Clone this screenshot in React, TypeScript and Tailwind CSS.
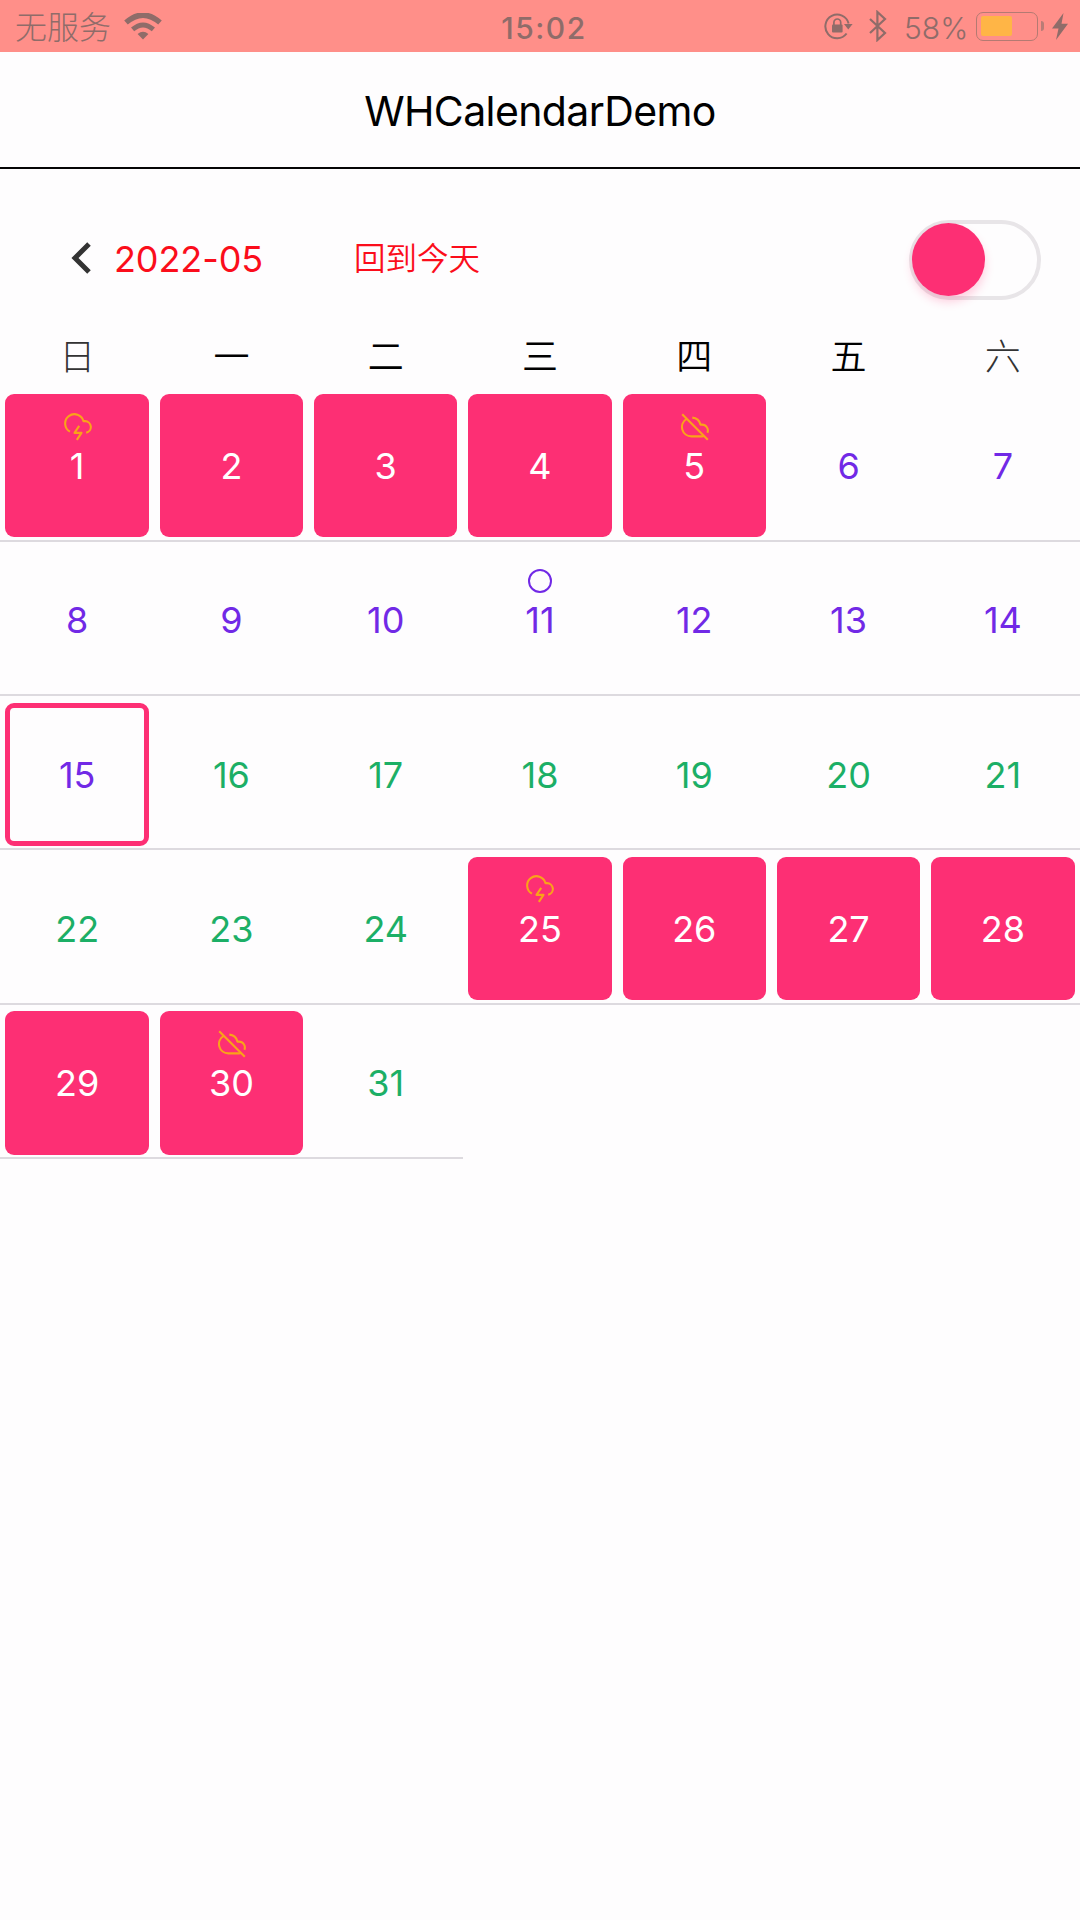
import React from "react";

type Mark = "storm" | "off" | "circle";

const PINK_DAYS = [1, 2, 3, 4, 5, 25, 26, 27, 28, 29, 30];
const MARKS: Record<number, Mark> = { 1: "storm", 5: "off", 11: "circle", 25: "storm", 30: "off" };
const WEEKDAYS = ["日", "一", "二", "三", "四", "五", "六"];
const TODAY = 15;

function WifiIcon() {
  return (
    <svg className="mt-[2px] h-[28px] w-[38px]" viewBox="0 0 38 28" fill="none" stroke="currentColor">
      <path d="M2 9.6Q19 -5.4 36 9.6" strokeWidth="5.4" />
      <path d="M8.6 16.4Q19 7.4 29.4 16.4" strokeWidth="4.8" />
      <path d="M13.6 21Q19 16.4 24.4 21L19 26.6Z" fill="currentColor" stroke="none" />
    </svg>
  );
}

function RotationLockIcon() {
  return (
    <svg className="h-[28px] w-[29px]" viewBox="0 0 29 28" fill="none" stroke="currentColor" strokeWidth="2">
      <path d="M24.6 11.5A11.8 11.8 0 1 0 22.6 21.5" />
      <path d="M20 12h8.6l-4.3 5.6z" fill="currentColor" stroke="none" />
      <rect x="8" y="12.5" width="10.6" height="8" rx="1" fill="currentColor" stroke="none" />
      <path d="M9.9 13v-2.6a3.4 3.4 0 0 1 6.8 0V13" strokeWidth="1.7" />
    </svg>
  );
}

function BluetoothIcon() {
  return (
    <svg className="h-[32px] w-[18px]" viewBox="0 0 18 32" fill="none" stroke="currentColor" strokeWidth="2.2">
      <path d="M1 9l15 14-7.6 7V2L16 9 1 23" />
    </svg>
  );
}

function Battery() {
  return (
    <div className="flex items-center gap-[3px]">
      <div className="h-[29px] w-[62px] rounded-[7px] border-[1.5px] border-[#b47a72] p-[3.5px]">
        <div className="h-full w-[31px] rounded-[2px] bg-[#ffb546]" />
      </div>
      <div className="h-[10px] w-[3px] rounded-r-full bg-[#b97c76]" />
    </div>
  );
}

function BoltIcon() {
  return (
    <svg className="h-[27px] w-[16px]" viewBox="0 0 16 27" fill="currentColor">
      <path d="M11.5 0L0 15.5h6.5L4 27 16 10.8H9.5z" />
    </svg>
  );
}

function DayMark({ mark }: { mark: Mark }) {
  if (mark === "circle") {
    return <div className="h-[24px] w-[24px] rounded-full border-2 border-[#7129e6]" />;
  }
  return (
    <svg
      className="ml-[1px] h-[28px] w-[28px] text-[#f9a319]"
      viewBox="0 0 24 24"
      fill="none"
      stroke="currentColor"
      strokeWidth="1.8"
      strokeLinejoin="round"
    >
      {mark === "storm" ? (
        <>
          <path d="M19 16.9A5 5 0 0 0 18 7h-1.26a8 8 0 1 0-11.62 9" />
          <path d="M13 11l-4 6h6l-4 6" />
        </>
      ) : (
        <>
          <path d="M22.61 16.95A5 5 0 0 0 18 10h-1.26a8 8 0 0 0-7.05-6M5 5a8 8 0 0 0 4 15h9a5 5 0 0 0 1.7-.3" />
          <path d="M1 1l22 22" />
        </>
      )}
    </svg>
  );
}

function Day({ day }: { day: number }) {
  const filled = PINK_DAYS.includes(day);
  const today = day === TODAY;
  const mark = MARKS[day];
  const tone = filled ? "text-white" : day <= TODAY ? "text-[#7129e6]" : "text-[#1caf66]";
  const box = filled
    ? "bg-[#fd2f74]"
    : today
      ? "border-[5px] border-[#fd2f74]"
      : "";
  return (
    <div className="relative h-[154.28px] p-[5.4px]">
      <div className={`flex h-full items-center justify-center rounded-[9px] text-[36px] leading-none font-[370] ${tone} ${box}`}>
        <span className="pt-[1px]">{day}</span>
      </div>
      {mark && (
        <div className="absolute inset-x-0 top-[24px] flex h-[28px] items-center justify-center">
          <DayMark mark={mark} />
        </div>
      )}
      <div className="absolute inset-x-0 bottom-[1px] h-[2px] bg-[#dddadf]" />
    </div>
  );
}

export default function App() {
  return (
    <div className="h-[1920px] w-[1080px] overflow-hidden bg-[#fefdfe] font-['Inter','Noto_Sans_CJK_SC',sans-serif]">
      <div className="grid h-[52px] grid-cols-3 items-center bg-[#ff8f89] text-[#8f6c69]">
        <div className="flex items-center pl-[15px]">
          <span className="w-[109px] pt-[3px] text-[32px] leading-none font-light whitespace-nowrap">无服务</span>
          <WifiIcon />
        </div>
        <div className="pt-[3px] pl-[8px] text-center text-[30px] leading-none font-medium tracking-[1.5px]">15:02</div>
        <div className="flex items-center justify-end pr-[12px]">
          <RotationLockIcon />
          <div className="w-[16px]" />
          <BluetoothIcon />
          <span className="ml-[17px] w-[72px] pt-[3px] text-[30px] leading-none font-[350] whitespace-nowrap">58%</span>
          <Battery />
          <div className="w-[8px]" />
          <BoltIcon />
        </div>
      </div>

      <header className="flex h-[117px] items-center justify-center border-b-2 border-[#050505] pt-[4px] text-black">
        <h1 className="text-[41px] leading-none tracking-[-0.6px]">WHCalendarDemo</h1>
      </header>

      <div className="flex h-[169px] items-center pt-[9px] pr-[39px] pl-[71px]">
        <svg className="h-[34px] w-[20px]" viewBox="0 0 20 34" fill="none" stroke="#333" strokeWidth="5">
          <path d="M18 3L4 17l14 14" />
        </svg>
        <span className="ml-[23px] w-[240px] pt-[1px] text-[36px] leading-none font-[370] tracking-[-0.1px] whitespace-nowrap text-[#fb0d1b]">
          2022-05
        </span>
        <span className="pt-[2px] text-[31.5px] leading-none font-[350] text-[#fb0d1b]">回到今天</span>
        <div className="mt-[3px] ml-auto flex h-[80px] w-[132px] items-center rounded-full border-[4px] border-[#e8e5e8]">
          <div className="-ml-[1px] h-[73px] w-[73px] shrink-0 rounded-full bg-[#fd2f74] shadow-[0_6px_10px_rgba(253,47,116,0.22)]" />
        </div>
      </div>

      <div className="mb-[12px] grid h-[38.6px] grid-cols-7 items-center">
        {WEEKDAYS.map((name, i) => (
          <div
            key={name}
            className={`text-center text-[36px] leading-none ${i === 0 || i === 6 ? "font-light text-[#333]" : "font-[350] text-black"}`}
          >
            {name}
          </div>
        ))}
      </div>

      <div className="grid grid-cols-7">
        {Array.from({ length: 31 }, (_, i) => (
          <Day key={i} day={i + 1} />
        ))}
      </div>
    </div>
  );
}
